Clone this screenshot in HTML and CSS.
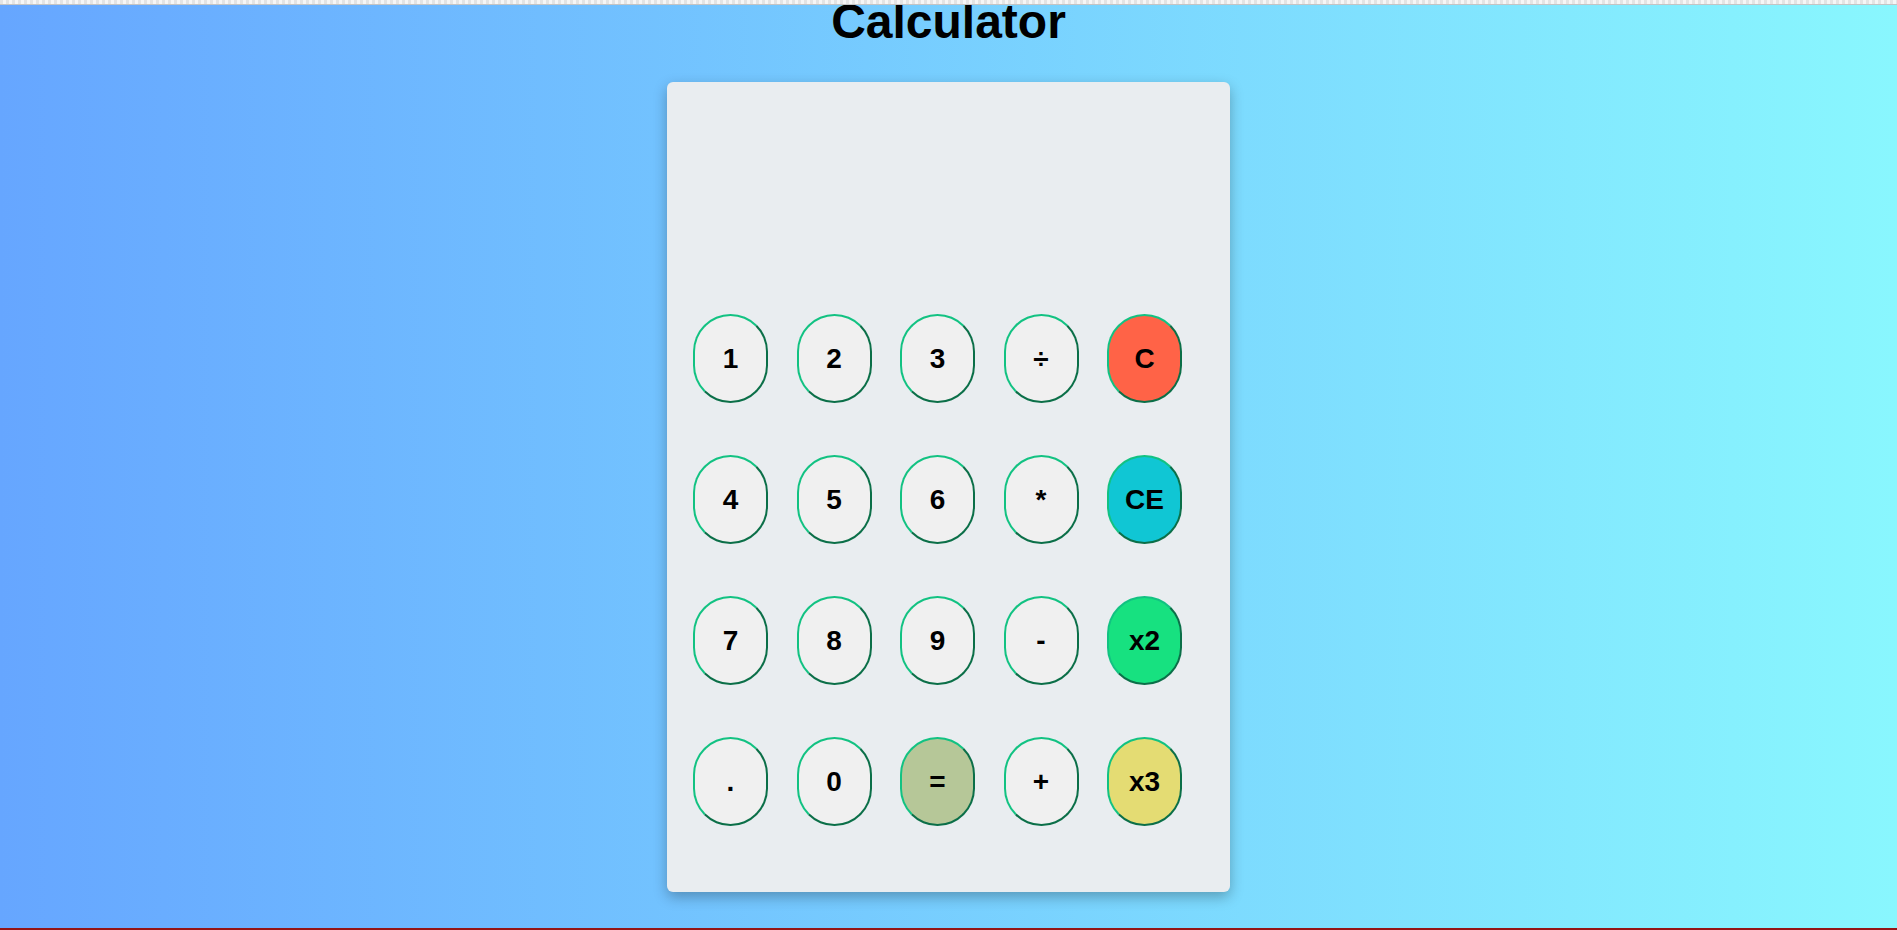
FILE: index.html
```html
<!DOCTYPE html>
<html lang="en">
<head>
<meta charset="utf-8">
<title>Calculator</title>
<link rel="stylesheet" href="styles.css">
</head>
<body>
<div class="top-strip"></div>
<h1 class="title">Calculator</h1>
<div class="calculator">
  <div class="display"></div>
  <div class="keys">
    <button class="key">1</button>
    <button class="key">2</button>
    <button class="key">3</button>
    <button class="key">÷</button>
    <button class="key key-clear">C</button>
    <button class="key">4</button>
    <button class="key">5</button>
    <button class="key">6</button>
    <button class="key">*</button>
    <button class="key key-ce">CE</button>
    <button class="key">7</button>
    <button class="key">8</button>
    <button class="key">9</button>
    <button class="key">-</button>
    <button class="key key-x2">x2</button>
    <button class="key">.</button>
    <button class="key">0</button>
    <button class="key key-eq">=</button>
    <button class="key">+</button>
    <button class="key key-x3">x3</button>
  </div>
</div>
<div class="bottom-line"></div>
</body>
</html>
```
FILE: styles.css
```css
html, body {
  height: 100%;
}
body {
  margin: 0;
  overflow: hidden;
  font-family: "Liberation Sans", Arial, sans-serif;
  background: linear-gradient(90deg, #66a6ff 0%, #89f7fe 100%);
  position: relative;
}
.top-strip {
  position: fixed;
  top: 0;
  left: 0;
  right: 0;
  height: 4px;
  background-color: #f2f2f2;
  background-image: repeating-linear-gradient(90deg, #e4e4e4 0 3px, #f6f6f6 3px 6px);
  border-bottom: 1px solid #c4c4c4;
  z-index: 2;
}
.title {
  margin: -6px 0 32px;
  font-size: 48px;
  line-height: 56px;
  font-weight: bold;
  text-align: center;
  color: #000;
}
.calculator {
  width: 563px;
  height: 810px;
  margin: 0 auto;
  box-sizing: border-box;
  padding: 0 0 0 26px;
  background: #e9edf0;
  border-radius: 6px;
  box-shadow: 0 5px 14px rgba(0, 0, 0, 0.28);
}
.display {
  height: 232px;
}
.keys {
  display: grid;
  grid-template-columns: repeat(5, 75px);
  grid-auto-rows: 89px;
  column-gap: 28.5px;
  row-gap: 52px;
}
.key {
  width: 75px;
  height: 89px;
  padding: 0;
  margin: 0;
  border: 2px solid;
  border-color: #12c282 #0b6f48 #0b6f48 #12c282;
  border-radius: 38px;
  background: #f0f0f0;
  font-family: "Liberation Sans", Arial, sans-serif;
  font-size: 28px;
  font-weight: bold;
  color: #000;
  cursor: pointer;
}
.key-clear {
  background: #ff6347;
}
.key-ce {
  background: #10c6d4;
}
.key-x2 {
  background: #17e180;
}
.key-eq {
  background: #b6c798;
}
.key-x3 {
  background: #e4dc73;
}
.bottom-line {
  position: fixed;
  left: 0;
  right: 0;
  bottom: 0;
  height: 2px;
  background: #951515;
  z-index: 2;
}
```
